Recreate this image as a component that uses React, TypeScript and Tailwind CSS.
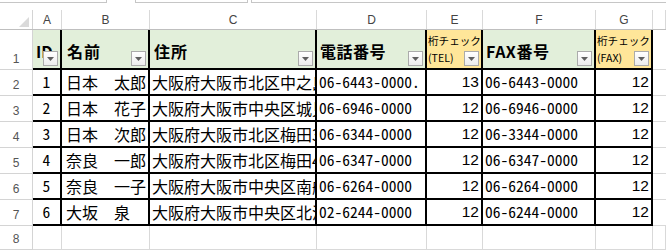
import React from 'react';

type Row = {
    n: number;
    id: string;
    name: string;
    addr: string;
    tel: string;
    telLen: number;
    fax: string;
    faxLen: number;
};

const rows: Row[] = [
    {n: 2, id: '1', name: '日本　太郎', addr: '大阪府大阪市北区中之島1-3-20', tel: '06-6443-0000.', telLen: 13, fax: '06-6443-0000', faxLen: 12},
    {n: 3, id: '2', name: '日本　花子', addr: '大阪府大阪市中央区城見1-2-27', tel: '06-6946-0000', telLen: 12, fax: '06-6946-0000', faxLen: 12},
    {n: 4, id: '3', name: '日本　次郎', addr: '大阪府大阪市北区梅田3-1-1', tel: '06-6344-0000', telLen: 12, fax: '06-3344-0000', faxLen: 12},
    {n: 5, id: '4', name: '奈良　一郎', addr: '大阪府大阪市北区梅田4-1-1', tel: '06-6347-0000', telLen: 12, fax: '06-6347-0000', faxLen: 12},
    {n: 6, id: '5', name: '奈良　一子', addr: '大阪府大阪市中央区南船場1-1', tel: '06-6264-0000', telLen: 12, fax: '06-6264-0000', faxLen: 12},
    {n: 7, id: '6', name: '大坂　泉', addr: '大阪府大阪市中央区北浜1-1', tel: '02-6244-0000', telLen: 12, fax: '06-6244-0000', faxLen: 12},
];

const cols = 'grid grid-cols-[33px_29px_88px_167px_110px_56px_113px_57px_13px]';
const jp = "font-['Noto_Sans_CJK_JP',sans-serif]";
const mono = "font-['Noto_Sans_Mono_CJK_JP','Liberation_Mono',monospace]";
const cell = 'border-r-2 border-b-2 border-black overflow-hidden whitespace-nowrap';

function Filter() {
    return (
        <div className="absolute right-[2px] bottom-[2px] w-[15px] h-[15px] border border-[#ababab] bg-gradient-to-b from-white to-[#ececec] flex items-center justify-center">
            <svg width="7" height="4" viewBox="0 0 7 4">
                <polygon points="0,0 7,0 3.5,4" fill="#5f5f5f"/>
            </svg>
        </div>
    );
}

function RowNum({n, h}: { n: number; h: string }) {
    return (
        <div className={`${h} border-r border-b border-[#d4d4d4] flex items-end justify-center pb-[1px] text-[12px] text-[#555] font-['Liberation_Sans',sans-serif]`}>
            {n}
        </div>
    );
}

export default function App() {
    return (
        <div className="w-[666px] h-[250px] overflow-hidden bg-white text-black">
            {/* formula bar remains */}
            <div className="flex h-[10px]">
                <div className="w-[107px] h-[3px] border-r border-b border-[#c6c6c6]"/>
                <div className="w-[28px]"/>
                <div className="w-[113px] h-[3px] border-l border-r border-b border-[#c6c6c6]"/>
                <div className="w-[3px]"/>
                <div className="flex-1 h-[3px] border-l border-b border-[#c6c6c6]"/>
            </div>

            {/* column letters */}
            <div className={`${cols} h-[20px] border-b border-[#bfbfbf] text-[12px] text-[#444] font-['Liberation_Sans',sans-serif]`}>
                <div className="relative border-r border-[#d4d4d4]">
                    <svg className="absolute right-[3px] bottom-[2px]" width="10" height="10" viewBox="0 0 10 10">
                        <polygon points="10,0 10,10 0,10" fill="#dadada"/>
                    </svg>
                </div>
                {['A', 'B', 'C', 'D', 'E', 'F', 'G', ''].map((c, i) => (
                    <div key={i} className="border-r border-[#d9d9d9] flex items-center justify-center">{c}</div>
                ))}
            </div>

            {/* header row */}
            <div className={`${cols} h-[40px]`}>
                <RowNum n={1} h="h-[40px]"/>
                <div className={`${cell} relative bg-[#e2efda] flex items-center pl-[3px] pt-[4px] text-[16px] font-bold ${jp}`}>
                    ID
                    <Filter/>
                </div>
                <div className={`${cell} relative bg-[#e2efda] flex items-center pl-[5px] pt-[4px] text-[16px] font-bold tracking-[1px] ${jp}`}>
                    名前
                    <Filter/>
                </div>
                <div className={`${cell} relative bg-[#e2efda] flex items-center pl-[4px] pt-[4px] text-[16px] font-bold tracking-[1px] ${jp}`}>
                    住所
                    <Filter/>
                </div>
                <div className={`${cell} relative bg-[#e2efda] flex items-center pl-[3px] pt-[4px] text-[16px] font-bold tracking-[0.5px] ${jp}`}>
                    電話番号
                    <Filter/>
                </div>
                <div className={`${cell} relative bg-[#ffe699] flex flex-col justify-center pl-[1px] text-[10.6px] leading-[17px] ${jp}`}>
                    <span>桁チェック</span>
                    <span>(TEL)</span>
                    <Filter/>
                </div>
                <div className={`${cell} relative bg-[#e2efda] flex items-center pl-[3px] pt-[4px] text-[16px] font-bold tracking-[0.5px] ${jp}`}>
                    FAX番号
                    <Filter/>
                </div>
                <div className={`${cell} relative bg-[#ffe699] flex flex-col justify-center pl-[1px] text-[10.6px] leading-[17px] ${jp}`}>
                    <span>桁チェック</span>
                    <span>(FAX)</span>
                    <Filter/>
                </div>
                <div className="border-b border-[#d9d9d9]"/>
            </div>

            {/* data rows */}
            {rows.map((r) => (
                <div key={r.n} className={`${cols} h-[26px] text-[15.5px]`}>
                    <RowNum n={r.n} h="h-[26px]"/>
                    <div className={`${cell} flex items-center justify-center ${mono}`}>{r.id}</div>
                    <div className={`${cell} flex items-center pl-[4px] text-[16px] ${jp}`}>{r.name}</div>
                    <div className={`${cell} flex items-center pl-[2px] text-[16px] ${jp}`}>{r.addr}</div>
                    <div className={`${cell} flex items-center pl-[2px] ${mono}`}>{r.tel}</div>
                    <div className={`${cell} flex items-center justify-end pr-[2px] font-['Liberation_Sans',sans-serif]`}>{r.telLen}</div>
                    <div className={`${cell} flex items-center pl-[2px] ${mono}`}>{r.fax}</div>
                    <div className={`${cell} flex items-center justify-end pr-[2px] font-['Liberation_Sans',sans-serif]`}>{r.faxLen}</div>
                    <div className="border-b border-[#d9d9d9]"/>
                </div>
            ))}

            {/* empty row 8 */}
            <div className={`${cols} h-[24px]`}>
                <RowNum n={8} h="h-[24px]"/>
                {Array.from({length: 8}).map((_, i) => (
                    <div key={i} className="border-r border-b border-[#d9d9d9]"/>
                ))}
            </div>
        </div>
    );
}
